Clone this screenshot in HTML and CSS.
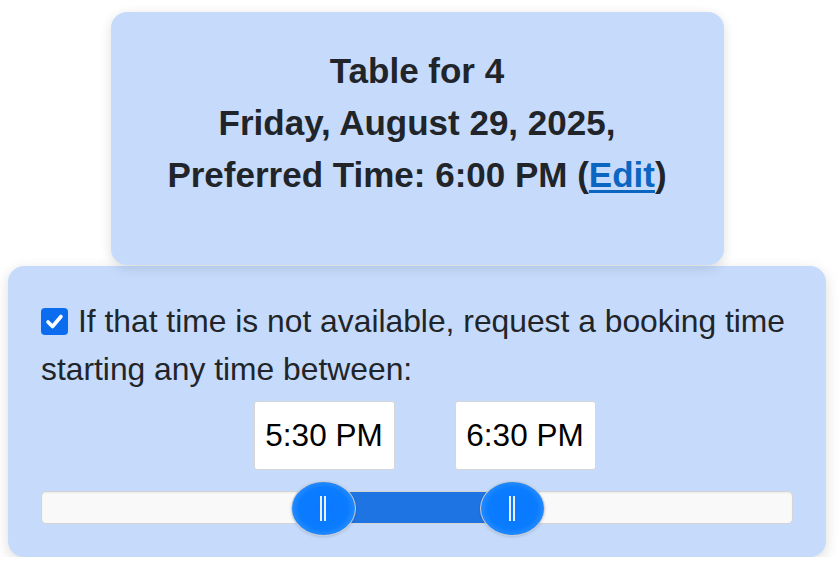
FILE: index.html
```html
<!DOCTYPE html>
<html lang="en">
<head>
<meta charset="utf-8">
<title>Booking</title>
<link rel="stylesheet" href="styles.css">
</head>
<body>
<div class="page">
  <section class="summary">
    <div class="line">Table for 4</div>
    <div class="line">Friday, August 29, 2025,</div>
    <div class="line">Preferred Time: 6:00 PM (<a href="#" class="edit">Edit</a>)</div>
  </section>
  <section class="flex-card">
    <label class="check-label">
      <span class="checkbox"><svg viewBox="0 0 27 27" width="27" height="27"><path d="M7 14 L11.5 18.5 L20 8.5" fill="none" stroke="#fff" stroke-width="3.6" stroke-linecap="round" stroke-linejoin="round"/></svg></span>If that time is not available, request a booking time starting any time between:
    </label>
    <div class="times">
      <div class="time-box">5:30 PM</div>
      <div class="time-box">6:30 PM</div>
    </div>
    <div class="track">
      <div class="fill" style="left: 281px; width: 189px;"></div>
      <div class="handle" style="left: 249px;"><span class="grip"></span></div>
      <div class="handle" style="left: 438px;"><span class="grip"></span></div>
    </div>
  </section>
</div>
</body>
</html>
```
FILE: styles.css
```css
html, body {
  margin: 0;
  padding: 0;
  background: #ffffff;
}
body {
  font-family: "Liberation Sans", Arial, sans-serif;
  color: #212529;
}
.page {
  width: 818px;
  padding: 12px 0 0 8px;
}
.summary {
  width: 613px;
  height: 253px;
  box-sizing: border-box;
  margin: 0 auto;
  background: #c6dbfc;
  border-radius: 16px;
  box-shadow: 0 3px 12px rgba(0, 0, 0, 0.13);
  padding-top: 33px;
  text-align: center;
  font-weight: bold;
  font-size: 35px;
  line-height: 52px;
  position: relative;
  z-index: 1;
}
.edit {
  color: #0b66c2;
  text-decoration: underline;
  text-decoration-thickness: 3px;
  text-underline-offset: 3px;
}
.flex-card {
  margin-top: 1px;
  background: #c6dbfc;
  border-radius: 16px;
  box-shadow: 0 4px 14px rgba(0, 0, 0, 0.14);
  padding: 31px 33px 33px 33px;
  height: 291px;
  box-sizing: border-box;
}
.check-label {
  display: block;
  font-size: 31.8px;
  line-height: 48px;
  color: #212529;
}
.checkbox {
  display: inline-block;
  width: 27px;
  height: 27px;
  background: #0b6cf0;
  border-radius: 4px;
  vertical-align: -3px;
  margin-right: 10px;
}
.checkbox svg {
  display: block;
}
.times {
  display: flex;
  justify-content: center;
  gap: 60px;
  margin-top: 8px;
  padding-left: 15px;
}
.time-box {
  width: 141px;
  height: 69px;
  box-sizing: border-box;
  background: #ffffff;
  border: 1px solid #d6d6d6;
  border-radius: 3px;
  font-size: 31.5px;
  line-height: 67px;
  text-align: center;
  color: #000;
}
.track {
  position: relative;
  margin-top: 21px;
  height: 33px;
  box-sizing: border-box;
  background: #f9f9f9;
  border: 1px solid #d4d4d4;
  border-radius: 5px;
  box-shadow: inset 0 1px 2px rgba(0,0,0,0.06);
}
.fill {
  position: absolute;
  top: 0;
  bottom: 0;
  background: #1f74e3;
}
.handle {
  position: absolute;
  top: -11px;
  width: 65px;
  height: 55px;
  box-sizing: border-box;
  border-radius: 50%;
  border: 1px solid #c9cdd4;
  background: radial-gradient(ellipse at center, #0a78ff 0%, #0a7cff 55%, #3c97ff 85%, #b6d4ff 100%);
  box-shadow: 0 1px 3px rgba(0,0,0,0.15);
}
.grip {
  position: absolute;
  left: 28px;
  top: 14px;
  width: 2px;
  height: 25px;
  border-left: 2px solid #e8f0ff;
  border-right: 2px solid #e8f0ff;
  box-sizing: content-box;
}
```
